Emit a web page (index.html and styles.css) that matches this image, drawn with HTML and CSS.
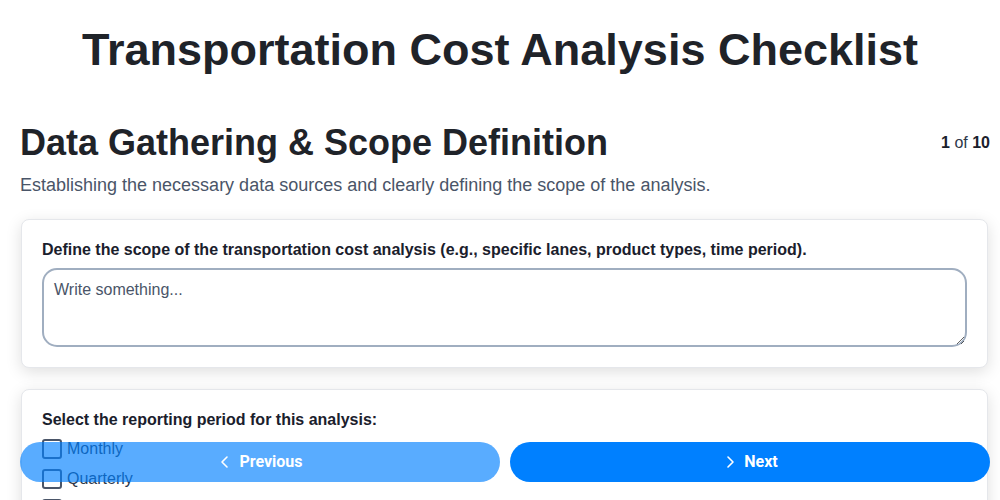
FILE: index.html
```html
<!DOCTYPE html>
<html lang="en">
<head>
  <meta charset="UTF-8">
  <meta name="viewport" content="width=device-width, initial-scale=1.0">
  <title>Transportation Cost Analysis Checklist</title>
  <link rel="stylesheet" href="styles.css">
</head>
<body>
  <h1 class="page-title">Transportation Cost Analysis Checklist</h1>

  <div class="checklist">
    <div class="step-header">
      <h2>Data Gathering &amp; Scope Definition</h2>
      <div class="step-count"><strong>1</strong> of <strong>10</strong></div>
    </div>
    <p class="step-desc">Establishing the necessary data sources and clearly defining the scope of the analysis.</p>

    <!-- question 1 -->
    <div class="card">
      <label class="question" for="scope">Define the scope of the transportation cost analysis (e.g., specific lanes, product types, time period).</label>
      <textarea id="scope" placeholder="Write something..."></textarea>
    </div>

    <!-- question 2 -->
    <div class="card">
      <div class="question">Select the reporting period for this analysis:</div>
      <div class="options">
        <label class="option"><input type="checkbox"> Monthly</label>
        <label class="option"><input type="checkbox"> Quarterly</label>
        <label class="option"><input type="checkbox"> Annually</label>
      </div>
    </div>
  </div>

  <div class="nav-buttons">
    <button class="btn btn-prev" disabled>
      <svg width="16" height="16" viewBox="0 0 16 16"><path d="M10 3L5 8l5 5" fill="none" stroke="#fff" stroke-width="1.6" stroke-linecap="round" stroke-linejoin="round"/></svg>
      Previous
    </button>
    <button class="btn btn-next">
      <svg width="16" height="16" viewBox="0 0 16 16"><path d="M6 3l5 5-5 5" fill="none" stroke="#fff" stroke-width="1.6" stroke-linecap="round" stroke-linejoin="round"/></svg>
      Next
    </button>
  </div>
</body>
</html>
```

FILE: styles.css
```css
body {
  margin: 0;
  font-family: "Liberation Sans", Arial, sans-serif;
  color: #1a202c;
  background: #fff;
  overflow: hidden;
}
.page-title {
  margin: 21px 0 0;
  font-size: 45px;
  line-height: 58px;
  text-align: center;
  color: #1f2329;
}
.checklist {
  padding: 42px 10px 0 20px;
}
.step-header {
  display: flex;
  justify-content: space-between;
  align-items: center;
}
.step-header h2 {
  margin: 0;
  font-size: 36px;
  line-height: 43px;
  color: #1f2329;
}
.step-count {
  font-size: 16px;
  color: #2d3748;
}
.step-count strong {
  color: #1a202c;
}
.step-desc {
  margin: 8px 0 20px;
  font-size: 18px;
  line-height: 27px;
  color: #4a5568;
}
.card {
  background: #fff;
  border: 1px solid #e5e7eb;
  border-radius: 8px;
  box-shadow: 0 4px 16px rgba(0, 0, 0, 0.13);
  padding: 20px;
  margin: 0 2px 21px 1px;
}
.question {
  display: block;
  font-weight: bold;
  font-size: 16px;
  line-height: 19px;
  margin-bottom: 9px;
}
textarea {
  display: block;
  width: 100%;
  height: 79px;
  box-sizing: border-box;
  border: 2px solid #a0aec0;
  border-radius: 15px;
  padding: 10px;
  font-family: "Liberation Sans", Arial, sans-serif;
  font-size: 16px;
  line-height: 19px;
  color: #2d3748;
}
textarea::placeholder {
  color: #4a5568;
}
.options {
  margin-top: -4px;
}
.option {
  display: flex;
  align-items: center;
  gap: 5px;
  height: 30px;
  font-size: 16px;
  color: #2d3748;
}
.option input {
  appearance: none;
  margin: 0;
  width: 20px;
  height: 20px;
  border: 2px solid #4a5568;
  border-radius: 3px;
}
.nav-buttons {
  position: fixed;
  left: 20px;
  right: 10px;
  bottom: 18px;
  display: flex;
  gap: 10px;
}
.btn {
  flex: 1;
  height: 40px;
  border: none;
  border-radius: 20px;
  background: #0080ff;
  color: #fff;
  font-family: Roboto, "Liberation Sans", sans-serif;
  font-weight: bold;
  font-size: 16px;
  line-height: 18px;
  padding: 0 0 1px;
  display: flex;
  justify-content: center;
  align-items: center;
  gap: 6px;
  cursor: pointer;
}
.btn:disabled {
  opacity: 0.65;
  cursor: default;
}
```
